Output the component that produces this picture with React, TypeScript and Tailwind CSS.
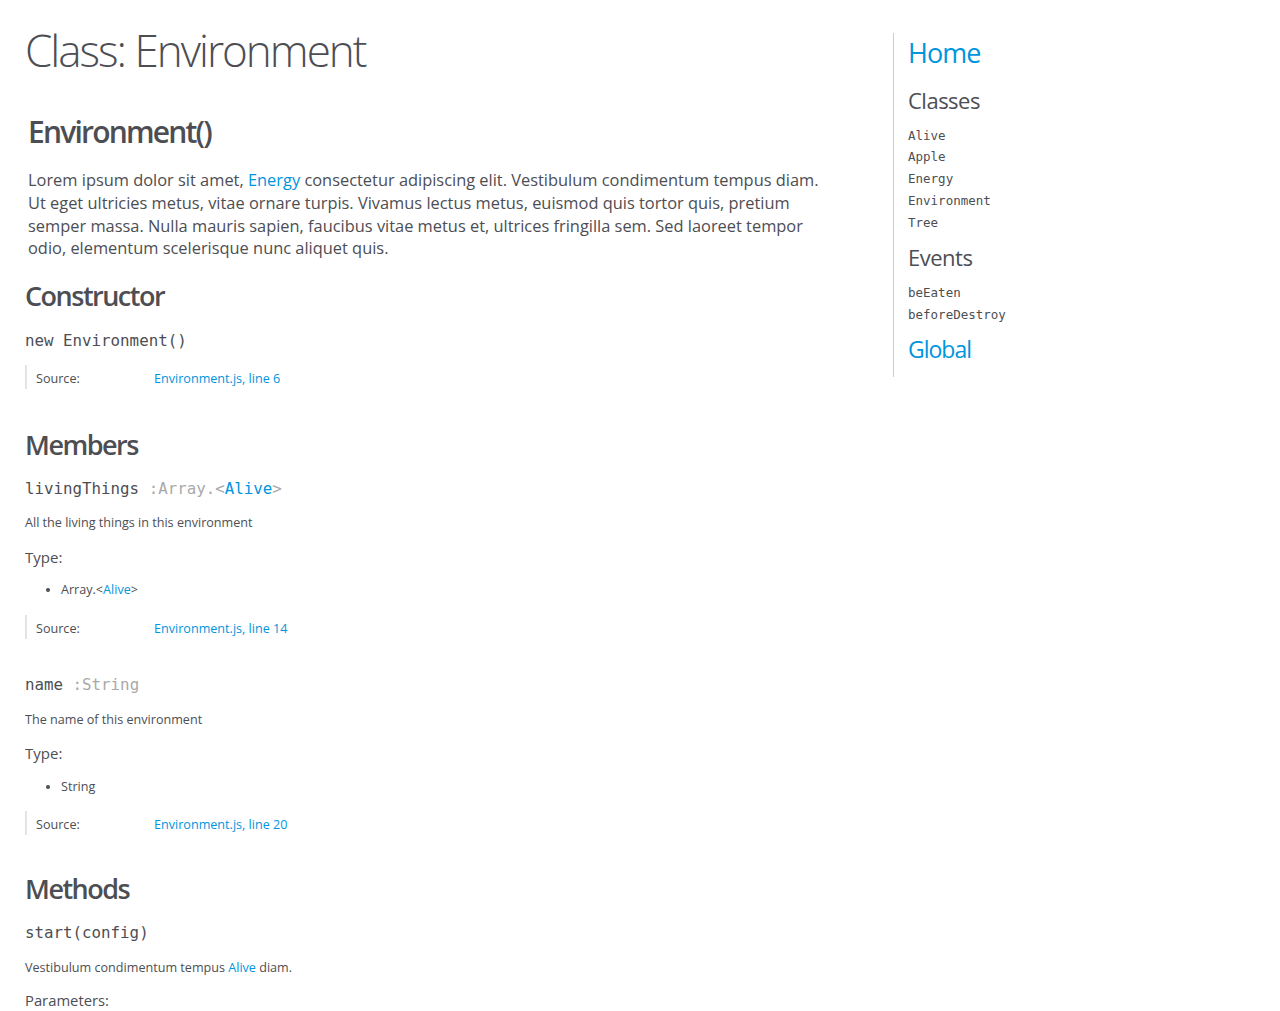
import React from 'react';

const sans = "font-['Open_Sans',sans-serif]";
const mono = "font-['DejaVu_Sans_Mono',monospace]";
const link = 'text-[#0095dd]';

const classes = ['Alive', 'Apple', 'Energy', 'Environment', 'Tree'];
const events = ['beEaten', 'beforeDestroy'];

function SourceRow({ line, className = '' }: { line: number; className?: string }) {
    return (
        <dl className={`flex h-[24px] border-l-2 border-[#e4e4e4] pl-[9px] text-[12.6px] leading-[27px] ${className}`}>
            <dt className="w-[118px]">Source:</dt>
            <dd className={link}>
                <a>Environment.js</a>, <a>line {line}</a>
            </dd>
        </dl>
    );
}

function Member({ name, type, desc, line, first }: {
    name: string;
    type: React.ReactNode;
    desc: string;
    line: number;
    first?: boolean;
}) {
    return (
        <section className={first ? 'mt-[17px]' : 'mt-[36.3px]'}>
            <h4 className={`${mono} text-[15.8px] leading-[20px]`}>
                {name} <span className="text-[#a9a9a9]">{type}</span>
            </h4>
            <p className="mt-[15.5px] text-[12.6px] leading-[18px]">{desc}</p>
            <h5 className="mt-[14.2px] text-[15px] leading-[20px]">Type:</h5>
            <ul className="mt-[14.7px] list-disc pl-[36px] text-[12.6px] leading-[18px]">
                <li>{type === ':String' ? 'String' : <>Array.&lt;<a className={link}>Alive</a>&gt;</>}</li>
            </ul>
            <SourceRow line={line} className="mt-[15.5px]" />
        </section>
    );
}

export default function App() {
    return (
        <div className={`${sans} flex min-h-screen bg-white text-[#4d4e53]`}>
            <main className="w-[893px] flex-none pl-[25px] pt-[26px]">
                <h1 className="text-[44px] font-light leading-[48px] tracking-[-2px]">Class: Environment</h1>

                {/* header */}
                <header className="pl-[3px]">
                    <h2 className="mt-[40.4px] text-[30px] font-semibold leading-[36px] tracking-[-1.8px]">Environment()</h2>
                    <p className="mt-[19px] w-[812px] text-[16.4px] leading-[22.67px]">
                        Lorem ipsum dolor sit amet, <a className={link}>Energy</a> consectetur adipiscing elit. Vestibulum
                        condimentum tempus diam. Ut eget ultricies metus, vitae ornare turpis. Vivamus lectus metus,
                        euismod quis tortor quis, pretium semper massa. Nulla mauris sapien, faucibus vitae metus et,
                        ultrices fringilla sem. Sed laoreet tempor odio, elementum scelerisque nunc aliquet quis.
                    </p>
                </header>

                <h3 className="mt-[18.6px] text-[27px] font-semibold leading-[34px] tracking-[-1.5px]">Constructor</h3>
                <h4 className={`${mono} mt-[18.5px] text-[15.8px] leading-[20px]`}>new Environment()</h4>
                <SourceRow line={6} className="mt-[14.2px]" />

                <h3 className="mt-[38.6px] text-[27px] font-semibold leading-[34px] tracking-[-1.5px]">Members</h3>
                <Member
                    first
                    name="livingThings"
                    type={<>:Array.&lt;<a className={link}>Alive</a>&gt;</>}
                    desc="All the living things in this environment"
                    line={14}
                />
                <Member name="name" type=":String" desc="The name of this environment" line={20} />

                <h3 className="mt-[37px] text-[27px] font-semibold leading-[34px] tracking-[-1.5px]">Methods</h3>
                <h4 className={`${mono} mt-[16.5px] text-[15.8px] leading-[20px]`}>start(config)</h4>
                <p className="mt-[16px] text-[12.6px] leading-[18px]">
                    Vestibulum condimentum tempus <a className={link}>Alive</a> diam.
                </p>
                <h5 className="mt-[13.5px] text-[14.8px] leading-[20px]">Parameters:</h5>
            </main>

            <nav className="mt-[33px] self-start border-l border-[#cccccc] pb-[13px] pl-[14px] pr-[20px] pt-[4px]">
                <h2 className={`${link} text-[27px] leading-[32px] tracking-[-1px]`}>
                    <a>Home</a>
                </h2>
                <h3 className="mt-[16.6px] text-[22px] leading-[28px] tracking-[-0.5px]">Classes</h3>
                <ul className={`${mono} mt-[11px] text-[12.5px] leading-[21.75px]`}>
                    {classes.map(c => (
                        <li key={c}><a>{c}</a></li>
                    ))}
                </ul>
                <h3 className="mt-[10px] text-[22px] leading-[28px] tracking-[-0.5px]">Events</h3>
                <ul className={`${mono} mt-[10.5px] text-[12.5px] leading-[21.75px]`}>
                    {events.map(e => (
                        <li key={e}><a>{e}</a></li>
                    ))}
                </ul>
                <h2 className={`${link} mt-[8.5px] text-[23px] leading-[30px] tracking-[-1px]`}>
                    <a>Global</a>
                </h2>
            </nav>
        </div>
    );
}
